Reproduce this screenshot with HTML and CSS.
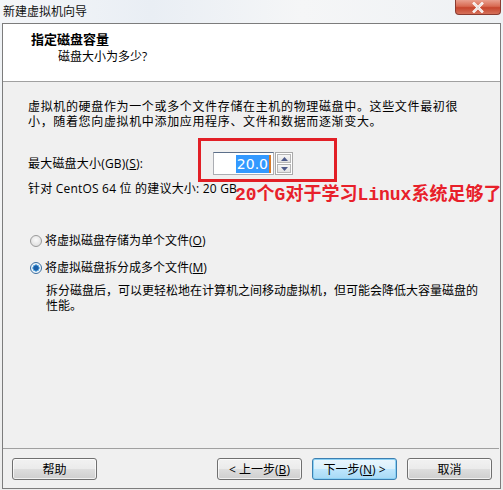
FILE: index.html
```html
<!DOCTYPE html>
<html lang="zh-CN">
<head>
<meta charset="utf-8">
<title>新建虚拟机向导</title>
<link rel="stylesheet" href="styles.css">
</head>
<body>
<div class="window">
  <div class="titlebar">
    <span class="title">新建虚拟机向导</span>
    <span class="close"><svg width="14" height="11" viewBox="0 0 14 11"><path d="M3 1.5 L11 9.5 M11 1.5 L3 9.5" stroke="#fff" stroke-width="2.6" stroke-linecap="square"/><path d="M3 1.5 L11 9.5 M11 1.5 L3 9.5" stroke="#5a1a10" stroke-width="0.6" opacity="0.35"/></svg></span>
  </div>
  <div class="dialog">
    <div class="header">
      <div class="h-title">指定磁盘容量</div>
      <div class="h-sub">磁盘大小为多少?</div>
    </div>
    <div class="content">
      <p class="intro">虚拟机的硬盘作为一个或多个文件存储在主机的物理磁盘中。这些文件最初很<br>小，随着您向虚拟机中添加应用程序、文件和数据而逐渐变大。</p>
      <div class="size-row">
        <span class="label">最大磁盘大小(GB)(<u>S</u>):</span>
        <div class="spin">
          <div class="spin-input"><span class="sel">20.0</span><span class="caret"></span></div>
          <div class="spin-btns">
            <span class="sbtn"><svg width="7" height="4" viewBox="0 0 7 4"><path d="M0 4 L3.5 0 L7 4 Z" fill="#4d5a8a"/></svg></span>
            <span class="sbtn"><svg width="7" height="4" viewBox="0 0 7 4"><path d="M0 0 L3.5 4 L7 0 Z" fill="#4d5a8a"/></svg></span>
          </div>
        </div>
        <div class="redbox"></div>
        <div class="note">20个G对于学习Linux系统足够了</div>
      </div>
      <p class="recommend">针对 CentOS 64 位 的建议大小: 20 GB</p>
      <div class="options">
        <label class="radio"><span class="dot"></span>将虚拟磁盘存储为单个文件(<u>O</u>)</label>
        <label class="radio"><span class="dot on"></span>将虚拟磁盘拆分成多个文件(<u>M</u>)</label>
        <p class="desc">拆分磁盘后，可以更轻松地在计算机之间移动虚拟机，但可能会降低大容量磁盘的<br>性能。</p>
      </div>
    </div>
    <div class="footer">
      <span class="btn">帮助</span>
      <span class="spacer"></span>
      <span class="btn">&lt; 上一步(<u>B</u>)</span>
      <span class="btn default">下一步(<u>N</u>) &gt;</span>
      <span class="btn">取消</span>
    </div>
  </div>
</div>
</body>
</html>
```
FILE: styles.css
```css
html, body {
  margin: 0;
  padding: 0;
}
body {
  width: 503px;
  height: 490px;
  overflow: hidden;
  font-family: "Open Sans", "Noto Sans CJK SC", sans-serif;
  font-size: 12px;
  color: #000;
  background: linear-gradient(180deg, #eef2f6 0%, #f3f4f5 40%, #ececec 100%);
}
.window {
  width: 503px;
  height: 490px;
  display: flex;
  flex-direction: column;
}
.titlebar {
  height: 23px;
  display: flex;
  justify-content: space-between;
  align-items: flex-start;
  background: linear-gradient(90deg, #f4f6f9 0%, #e9eef4 30%, #f5f6f7 60%, #eef1f4 100%);
}
.title {
  padding: 3px 0 0 3px;
  line-height: 17px;
  color: #111;
}
.close {
  width: 46px;
  height: 15px;
  margin-right: 2px;
  box-sizing: border-box;
  border: 1px solid #8a3b30;
  border-top: none;
  border-radius: 0 0 4px 4px;
  background: linear-gradient(180deg, #e9a08f 0%, #d86a52 45%, #c6452d 55%, #d5715a 100%);
  display: flex;
  align-items: center;
  justify-content: center;
}
.dialog {
  margin-left: 2px;
  width: 499px;
  height: 466px;
  box-sizing: border-box;
  border: 1px solid #7c7c7c;
  background: #f0f0f0;
  display: flex;
  flex-direction: column;
}
.header {
  height: 58px;
  box-sizing: border-box;
  background: #fff;
  border-bottom: 1px solid #a0a0a0;
  padding: 7px 0 0 28px;
}
.h-title {
  font-weight: bold;
  font-size: 13px;
  line-height: 17px;
}
.h-sub {
  line-height: 17px;
  padding-left: 27px;
}
.content {
  flex: 1;
  padding: 17px 0 0 25px;
}
p {
  margin: 0;
}
.intro {
  line-height: 15px;
  letter-spacing: 0.65px;
  white-space: nowrap;
}
.size-row {
  position: relative;
  margin-top: 23px;
  display: flex;
  align-items: center;
  height: 23px;
}
.label {
  width: 185px;
  line-height: 17px;
  letter-spacing: 0.2px;
}
.spin {
  display: flex;
  align-items: center;
  gap: 1px;
}
.spin-input {
  width: 61px;
  height: 23px;
  box-sizing: border-box;
  border: 1px solid #abadb3;
  border-top-color: #5c6f8a;
  background: #fff;
  display: flex;
  justify-content: flex-end;
  align-items: center;
  padding-right: 2px;
}
.sel {
  background: #3399ff;
  color: #fff;
  font-family: "DejaVu Sans", sans-serif;
  font-size: 14px;
  line-height: 18px;
  padding: 0 1px;
}
.caret {
  width: 2px;
  height: 18px;
  background: #d67a2a;
}
.spin-btns {
  display: flex;
  flex-direction: column;
  gap: 1px;
  border: 1px solid #a9a9a9;
  padding: 1px;
  background: #fff;
}
.sbtn {
  width: 14px;
  height: 9px;
  box-sizing: border-box;
  border: 1px solid #b6b6b6;
  background: linear-gradient(180deg, #f6f6f6, #e2e2e2);
  display: flex;
  align-items: center;
  justify-content: center;
}
.redbox {
  position: absolute;
  left: 170px;
  top: -14px;
  width: 139px;
  height: 44px;
  box-sizing: border-box;
  border: 3px solid #e21f26;
}
.note {
  position: absolute;
  left: 207px;
  top: 33px;
  white-space: nowrap;
  color: #e8202a;
  font-weight: bold;
  font-size: 18px;
  line-height: 20px;
  font-family: "Liberation Mono", "Noto Sans CJK SC", monospace;
}
.recommend {
  margin-top: 5px;
  line-height: 17px;
  letter-spacing: 0.2px;
}
.options {
  margin-top: 35px;
  display: flex;
  flex-direction: column;
}
.radio {
  display: flex;
  align-items: center;
  height: 17px;
  margin-bottom: 10px;
  line-height: 17px;
}
.dot {
  width: 12px;
  height: 12px;
  box-sizing: border-box;
  border-radius: 50%;
  border: 1px solid #9a9a9a;
  background: radial-gradient(circle at 50% 40%, #fafafa, #d8d8d8);
  margin: 0 3px 0 2px;
}
.dot.on {
  border-color: #3c6fa0;
  background: radial-gradient(circle, #1b5fa8 0 2.4px, #5aa8e0 2.8px 3.4px, #f0f4f8 3.8px);
}
.desc {
  margin-top: -3px;
  padding-left: 18px;
  line-height: 15px;
  white-space: nowrap;
}
.footer {
  height: 40px;
  box-sizing: border-box;
  border-top: 1px solid #a0a0a0;
  margin: 0 1px 0 0;
  padding: 9px 7px 0 9px;
  display: flex;
  align-items: flex-start;
  gap: 10px;
}
.spacer {
  flex: 1;
}
.btn {
  width: 85px;
  height: 22px;
  box-sizing: border-box;
  border: 1px solid #707070;
  border-radius: 3px;
  background: linear-gradient(180deg, #f2f2f2 0%, #ebebeb 48%, #dddddd 52%, #cfcfcf 100%);
  box-shadow: inset 0 0 0 1px rgba(255,255,255,0.7);
  display: flex;
  align-items: center;
  justify-content: center;
  line-height: 17px;
}
.btn.default {
  border-color: #3c7fb1;
  background: linear-gradient(180deg, #eaf6fd 0%, #d9f0fc 48%, #bee6fd 52%, #a7d9f5 100%);
  box-shadow: inset 0 0 0 1px #8ad1f5;
}
```
